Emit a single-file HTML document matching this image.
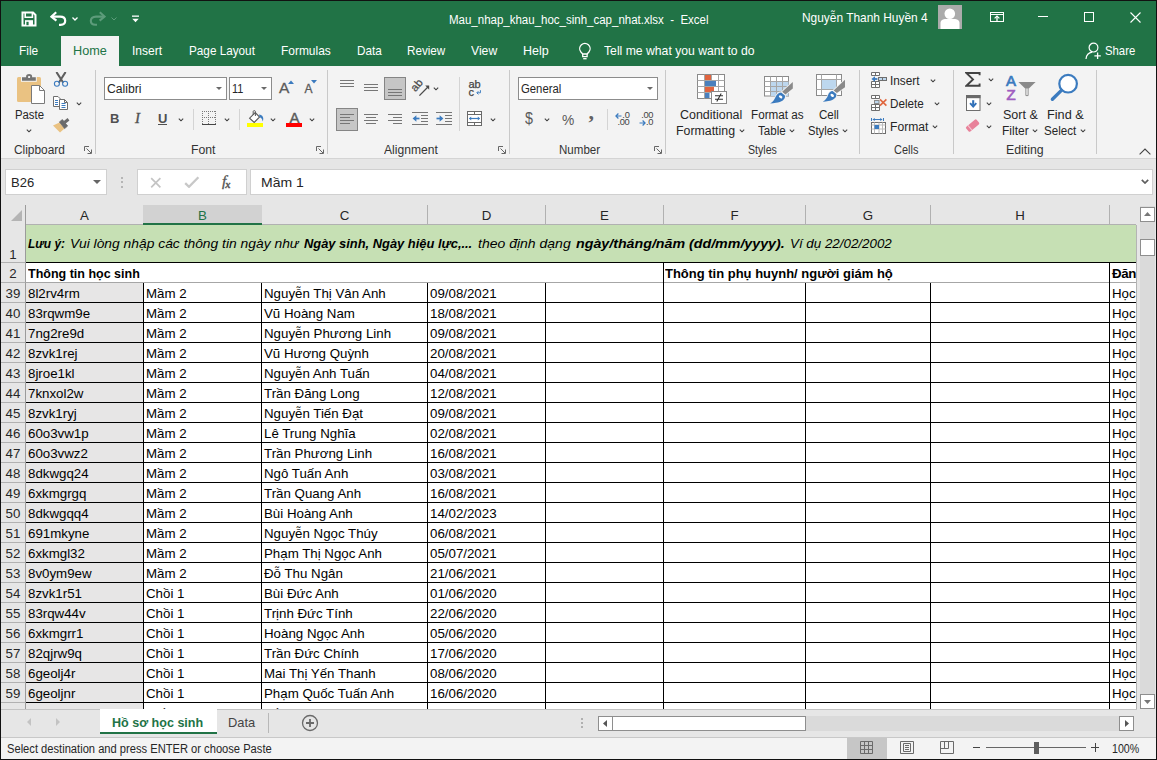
<!DOCTYPE html>
<html lang="vi">
<head>
<meta charset="utf-8">
<title>Mau_nhap_khau_hoc_sinh_cap_nhat.xlsx - Excel</title>
<style>
html,body{margin:0;padding:0;background:#e6e6e6;}
body{width:1157px;height:760px;overflow:hidden;position:relative;font-family:"Liberation Sans",sans-serif;font-size:12px;color:#262626;}
#win{position:absolute;left:0;top:0;width:1157px;height:760px;overflow:hidden;background:#e6e6e6;}
#frame{position:absolute;left:0;top:0;width:1157px;height:760px;border:1px solid #111;z-index:50;pointer-events:none;}
#win *{box-sizing:border-box;}
.abs{position:absolute;}

/* ---------- title bar ---------- */
#title{position:absolute;left:0;top:0;width:1157px;height:66px;background:#217346;}
#avatar{position:absolute;left:938px;top:5px;width:24px;height:24px;background:#ababab;overflow:hidden;}
#hometab{position:absolute;left:61px;top:36px;width:58px;height:30px;background:#f3f3f3;}

/* ---------- ribbon ---------- */
#ribbon{position:absolute;left:1px;top:66px;width:1155px;height:93px;background:#f3f3f3;border-bottom:1px solid #d4d4d4;}
.sep{position:absolute;top:70px;width:1px;height:84px;background:#c9c9c9;}
.combo{position:absolute;top:77px;height:23px;background:#fff;border:1px solid #8c8c8c;font-size:12.5px;line-height:21px;padding-left:3px;color:#262626;}
.combo i{position:absolute;right:4px;top:9px;width:0;height:0;border-left:3px solid transparent;border-right:3px solid transparent;border-top:3px solid #6a6a6a;}
.pressed{position:absolute;background:#c6c6c6;border:1px solid #858585;}

/* ---------- formula bar ---------- */
.fbox{position:absolute;top:169px;height:26px;background:#fff;border:1px solid #d0d0d0;}
#namebox{left:5px;width:102px;}
#namebox i{position:absolute;left:87px;top:10px;width:0;height:0;border-left:4px solid transparent;border-right:4px solid transparent;border-top:4px solid #666;}
#fxbox{left:137px;width:110px;}
#finput{left:250px;width:903px;}

/* ---------- grid ---------- */
#grid{position:absolute;left:0;top:0;width:1157px;height:709px;font-size:13.3px;color:#000;}
#colhdr{position:absolute;left:0;top:205px;width:1157px;height:20px;}
.corner{position:absolute;left:1px;top:0;width:25px;height:20px;border-right:1px solid #9b9b9b;}
.corner i{position:absolute;left:9.5px;top:4.5px;width:0;height:0;border-left:11.5px solid transparent;border-bottom:11.5px solid #b4b4b4;}
.ch{position:absolute;top:0;height:19px;line-height:22px;text-align:center;font-size:13.3px;color:#262626;border-right:1px solid #b1b1b1;box-sizing:content-box !important;}
.ch.sel{background:#d2d2d2;color:#217346;border-bottom:2px solid #217346;height:18px;border-right:none;padding-right:1px;margin-left:-1px;padding-left:1px;}
.rh{position:absolute;left:1px;width:25px;height:19px;line-height:22px;text-align:center;font-size:13.3px;color:#262626;border-right:1px solid #9b9b9b;border-bottom:1px solid #b1b1b1;background:#e6e6e6;box-sizing:content-box !important;width:24px;}
#r1{position:absolute;left:26px;top:225px;width:1110px;height:38px;background:#c6e0b4;border-bottom:1px solid #000;font-style:italic;white-space:nowrap;overflow:hidden;}

#r2{position:absolute;left:26px;top:263px;width:1110px;height:20px;background:#fff;border-bottom:1px solid #a6a6a6;white-space:nowrap;overflow:hidden;}
.row{position:absolute;left:26px;width:1110px;height:20px;background:#fff;border-bottom:1px solid #000;overflow:hidden;white-space:nowrap;}
.c{position:absolute;top:0;height:19px;line-height:21px;padding-left:2px;overflow:hidden;}
.c.a{left:0;width:117px;background:#e7e6e6;}
.c.b{left:118px;width:117px;}
.c.cc{left:236px;width:165px;}
.c.d{left:402px;width:117px;}
.c.i{left:1084px;width:26px;}
.vl{position:absolute;width:1px;background:#000;}

/* ---------- bottom ---------- */
#tabbar{position:absolute;left:1px;top:709px;width:1155px;height:28px;background:#e6e6e6;}
#status{position:absolute;left:1px;top:737px;width:1155px;height:22px;background:#f3f3f3;border-top:1px solid #c8c8c8;}
.sb{position:absolute;background:#fff;border:1px solid #8e8e8e;}
/* fitted text */
.f{position:absolute;display:block;white-space:nowrap;transform-origin:0 50%;line-height:1.117;}
#colhdr:after{content:'';position:absolute;left:26px;top:19px;width:1110px;height:1px;background:#b1b1b1;}
.ch.sel{z-index:2;}
</style>
</head>
<body>
<div id="win">
<!-- ===== title bar + tabs ===== -->
<div id="title">
<!-- QAT -->
<svg class="abs" style="left:21px;top:11px" width="16" height="16" viewBox="0 0 16 16"><path d="M1.5 1.5 H12 L14.5 4 V14.5 H1.5 Z" fill="none" stroke="#fff" stroke-width="2"/><path d="M4.2 1.5 V6.2 H11.4 V1.5" fill="none" stroke="#fff" stroke-width="1.6"/><rect x="4" y="9.2" width="8" height="5.5" fill="#fff"/><rect x="5.4" y="10.8" width="2.2" height="3.4" fill="#217346"/></svg>
<svg class="abs" style="left:50px;top:11px" width="17" height="15" viewBox="0 0 17 15"><path d="M6.2 1.2 L1.4 5.6 L6.4 9.6" fill="none" stroke="#fff" stroke-width="2.2" stroke-linejoin="miter"/><path d="M1.8 5.6 H10 C13.6 5.6 15.2 7.6 15.2 9.8 C15.2 12.2 13.6 13.8 10.6 13.8 H9" fill="none" stroke="#fff" stroke-width="2.2"/></svg>
<svg class="abs" style="left:72px;top:17px" width="6" height="4" viewBox="0 0 6 4"><path d="M0.5 0.5 L3 3 L5.5 0.5" fill="none" stroke="#fff" stroke-width="1.3"/></svg>
<svg class="abs" style="left:89px;top:11px" width="17" height="15" viewBox="0 0 17 15"><path d="M10.8 1.2 L15.6 5.6 L10.6 9.6" fill="none" stroke="#5d9c7b" stroke-width="2.1"/><path d="M15.2 5.6 H7 C3.4 5.6 1.8 7.6 1.8 9.8 C1.8 12.2 3.4 13.8 6.4 13.8 H8" fill="none" stroke="#5d9c7b" stroke-width="2.1"/></svg>
<svg class="abs" style="left:111px;top:17px" width="6" height="4" viewBox="0 0 6 4"><path d="M0.5 0.5 L3 3 L5.5 0.5" fill="none" stroke="#5d9c7b" stroke-width="1"/></svg>
<svg class="abs" style="left:132px;top:15px" width="7" height="8" viewBox="0 0 7 8"><rect x="0" y="0.5" width="7" height="1.3" fill="#fff"/><path d="M0.3 3.8 H6.7 L3.5 7.2 Z" fill="#fff"/></svg>

<span class="f" style="transform:scaleX(0.9581);left:448.7px;top:14.3px;font-size:12px;color:#fff;">Mau_nhap_khau_hoc_sinh_cap_nhat.xlsx&nbsp; -&nbsp; Excel</span>
<span class="f" style="transform:scaleX(0.9163);left:801.9px;top:11.3px;font-size:13px;color:#fff;">Nguyễn Thanh Huyền 4</span>

<div id="avatar"><svg width="24" height="24" viewBox="0 0 24 24"><circle cx="11.8" cy="8.8" r="5.3" fill="#fff"/><path d="M2.5 24 V18 C2.5 15.4 5 14 8 14 H16 C19 14 21.5 15.4 21.5 18 V24 Z" fill="#fff"/></svg></div>
<!-- window buttons -->
<svg class="abs" style="left:989.5px;top:12px" width="14" height="10" viewBox="0 0 14 10"><rect x="0.5" y="0.5" width="13" height="9" fill="none" stroke="#fff"/><path d="M0.5 2.5 H13.5" stroke="#fff"/><path d="M7 9.5 V4.6" fill="none" stroke="#fff" stroke-width="1.3"/><path d="M4.6 6.4 L7 4 L9.4 6.4" fill="none" stroke="#fff" stroke-width="1.2"/></svg>
<div class="abs" style="left:1038px;top:16px;width:10px;height:1px;background:#fff"></div>
<div class="abs" style="left:1084px;top:12px;width:10px;height:10px;border:1px solid #fff"></div>
<svg class="abs" style="left:1130px;top:12px" width="11" height="11" viewBox="0 0 11 11"><path d="M0.5 0.5 L10.5 10.5 M10.5 0.5 L0.5 10.5" stroke="#fff" stroke-width="1.1"/></svg>

<div id="hometab"></div>
<span class="f" style="transform:scaleX(0.9163);left:19.4px;top:44.3px;font-size:13px;color:#fff;">File</span>
<span class="f" style="transform:scaleX(0.9257);left:132.2px;top:44.3px;font-size:13px;color:#fff;">Insert</span>
<span class="f" style="transform:scaleX(0.9025);left:188.6px;top:44.3px;font-size:13px;color:#fff;">Page Layout</span>
<span class="f" style="transform:scaleX(0.9190);left:280.6px;top:44.3px;font-size:13px;color:#fff;">Formulas</span>
<span class="f" style="transform:scaleX(0.9028);left:356.8px;top:44.3px;font-size:13px;color:#fff;">Data</span>
<span class="f" style="transform:scaleX(0.8962);left:407.4px;top:44.3px;font-size:13px;color:#fff;">Review</span>
<span class="f" style="transform:scaleX(0.9373);left:471.4px;top:44.3px;font-size:13px;color:#fff;">View</span>
<span class="f" style="transform:scaleX(0.9607);left:523.4px;top:44.3px;font-size:13px;color:#fff;">Help</span>
<span class="f" style="transform:scaleX(0.9382);left:603.7px;top:44.3px;font-size:13px;color:#fff;">Tell me what you want to do</span>
<span class="f" style="transform:scaleX(0.8702);left:1104.6px;top:44.3px;font-size:13px;color:#fff;">Share</span>
<span class="f" style="transform:scaleX(0.9744);left:72.8px;top:44.3px;font-size:13px;color:#217346;">Home</span>

<!-- tab row icons -->
<svg class="abs" style="left:578px;top:42px" width="14" height="18" viewBox="0 0 14 18"><path d="M4.7 12 L2.7 9.7 A5.2 5.2 0 1 1 11.1 9.7 L9.1 12 Z" fill="none" stroke="#fff" stroke-width="1.3" stroke-linejoin="round"/><path d="M4.7 12 V14.6 H9.1 V12" fill="none" stroke="#fff" stroke-width="1.3"/><path d="M5.2 16.7 H8.6" stroke="#fff" stroke-width="1.3"/></svg>
<svg class="abs" style="left:1085px;top:42px" width="18" height="18" viewBox="0 0 18 18"><circle cx="8.5" cy="5.6" r="4.4" fill="none" stroke="#fff" stroke-width="1.2"/><path d="M1 17 C1.4 12.6 4 10.6 7.2 10.2" fill="none" stroke="#fff" stroke-width="1.2"/><path d="M12.6 10.6 V17 M9.4 13.8 H15.8" stroke="#fff" stroke-width="1.3"/></svg>

</div>
<!-- ===== ribbon ===== -->
<div id="ribbon"></div>
<!-- Clipboard -->
<svg class="abs" style="left:16px;top:73px" width="30" height="32" viewBox="0 0 30 32">
<rect x="1" y="4" width="24" height="25" rx="1.5" fill="#eac282"/>
<rect x="5" y="3.5" width="15.8" height="5.3" fill="#f3f3f3"/><path d="M6 4.2 H10.1 V3.2 C10.1 0.4 16.1 0.4 16.1 3.2 V4.2 H19.8 V7.8 H6 Z" fill="#737373"/><rect x="12.1" y="2.9" width="2" height="2" rx="0.5" fill="#f3f3f3"/>
<path d="M15.5 12.5 H23.5 L28.5 17.5 V30.5 H15.5 Z" fill="#fff" stroke="#7a7a7a"/><path d="M23.5 12.5 V17.5 H28.5" fill="none" stroke="#7a7a7a"/></svg>
<span class="f" style="transform:scaleX(0.9450);left:14.9px;top:109.0px;font-size:12px;color:#262626;">Paste</span>
<svg class="abs" style="left:26px;top:128.6px" width="6" height="4" viewBox="0 0 6 4"><path d="M0.8 0.6 L3 2.8 L5.2 0.6" fill="none" stroke="#444" stroke-width="1.15"/></svg>
<svg class="abs" style="left:53px;top:72px" width="16" height="16" viewBox="0 0 16 16">
<path d="M3.8 0.6 L9.8 10 M12.2 0.6 L6.2 10" stroke="#5f5f5f" stroke-width="2" fill="none" stroke-linecap="round"/>
<circle cx="3.9" cy="11.8" r="2.5" fill="none" stroke="#3b7bbf" stroke-width="1.1"/><circle cx="12.1" cy="11.8" r="2.5" fill="none" stroke="#3b7bbf" stroke-width="1.1"/></svg>
<svg class="abs" style="left:52px;top:95px" width="17" height="16" viewBox="0 0 17 16">
<path d="M1.5 1.5 H6 L8.5 4 V11.5 H1.5 Z" fill="#fff" stroke="#6e6e6e"/><path d="M3 5.5 H6 M3 7.5 H6 M3 9.5 H6" stroke="#3b7bbf"/>
<path d="M7.5 4.5 H12.5 L15.5 7.5 V14.5 H7.5 Z" fill="#fff" stroke="#6e6e6e"/><path d="M12.5 4.5 V7.5 H15.5" fill="none" stroke="#6e6e6e"/><path d="M9.5 8.5 H13.5 M9.5 10.5 H13.5 M9.5 12.5 H13.5" stroke="#3b7bbf"/></svg>
<svg class="abs" style="left:76px;top:102px" width="6" height="4" viewBox="0 0 6 4"><path d="M0.8 0.6 L3 2.8 L5.2 0.6" fill="none" stroke="#444" stroke-width="1.15"/></svg>
<svg class="abs" style="left:52px;top:118px" width="18" height="16" viewBox="0 0 18 16">
<path d="M1 7.5 L7.5 4.5 L12.5 10.5 L8 14.6 Z" fill="#eac282"/>
<path d="M7.4 3.9 L10.4 1.6 L15.6 8 L12.6 10.6 Z" fill="#6a6a6a" stroke="#6a6a6a" stroke-width="0.8" stroke-linejoin="round"/>
<path d="M11.6 3.3 L15.6 0.1 L17.4 2.5 L13.4 5.7 Z" fill="#6a6a6a"/></svg>
<span class="f" style="transform:scaleX(0.9908);left:14.0px;top:143.8px;font-size:12px;color:#333;">Clipboard</span>
<svg class="abs" style="left:84px;top:146px" width="8" height="8" viewBox="0 0 8 8"><path d="M0.5 5 V0.5 H5" fill="none" stroke="#666"/><path d="M2.5 2.5 L7 7 M7.5 3.5 V7.5 H3.5" fill="none" stroke="#666"/></svg>
<div class="sep" style="left:95px"></div>
<!-- Font -->
<div class="combo" style="left:104px;width:123px"><i></i></div>
<span class="f" style="transform:scaleX(1.0142);left:106.9px;top:82.6px;font-size:12px;color:#262626;">Calibri</span>
<div class="combo" style="left:229px;width:43px"><i></i></div>
<span class="f" style="transform:scaleX(0.9063);left:232.3px;top:82.6px;font-size:12px;color:#262626;">11</span>
<div class="abs" style="left:279px;top:80px;font-size:15.5px;color:#5a5a5a;line-height:16px;-webkit-text-stroke:0.3px #5a5a5a">A</div>
<svg class="abs" style="left:288px;top:80px" width="6" height="4" viewBox="0 0 6 4"><path d="M0 4 L3 0.4 L6 4 Z" fill="#3b7bbf"/></svg>
<div class="abs" style="left:304.5px;top:83px;font-size:12px;color:#5a5a5a;line-height:13px;-webkit-text-stroke:0.3px #5a5a5a">A</div>
<svg class="abs" style="left:311px;top:80px" width="6" height="4" viewBox="0 0 6 4"><path d="M0 0 L3 3.6 L6 0 Z" fill="#3b7bbf"/></svg>
<div class="abs" style="left:110px;top:111px;font-size:13px;font-weight:bold;color:#505050;line-height:15px">B</div>
<div class="abs" style="left:135px;top:110px;font-family:'Liberation Serif',serif;font-size:15px;font-style:italic;color:#505050;line-height:16px;-webkit-text-stroke:0.35px #505050">I</div>
<div class="abs" style="left:158px;top:111px;font-size:13px;color:#505050;line-height:15px;border-bottom:1px solid #505050;height:14px;font-weight:bold">U</div>
<svg class="abs" style="left:178px;top:118px" width="6" height="4" viewBox="0 0 6 4"><path d="M0.8 0.6 L3 2.8 L5.2 0.6" fill="none" stroke="#444" stroke-width="1.15"/></svg>
<div class="abs" style="left:193px;top:109px;width:1px;height:21px;background:#d4d4d4"></div>
<svg class="abs" style="left:202px;top:111px" width="14" height="14" viewBox="0 0 14 14" shape-rendering="crispEdges">
<path d="M0 0.5 H14 M0 6.5 H14" fill="none" stroke="#7a7a7a" stroke-dasharray="1 1"/><path d="M0.5 0 V13 M6.5 0 V13 M13.5 0 V13" fill="none" stroke="#7a7a7a" stroke-dasharray="1 1"/><path d="M0 13.5 H14" stroke="#444"/></svg>
<svg class="abs" style="left:224px;top:118px" width="6" height="4" viewBox="0 0 6 4"><path d="M0.8 0.6 L3 2.8 L5.2 0.6" fill="none" stroke="#444" stroke-width="1.15"/></svg>
<div class="abs" style="left:239px;top:109px;width:1px;height:21px;background:#d4d4d4"></div>
<svg class="abs" style="left:247px;top:110px" width="18" height="17" viewBox="0 0 18 17">
<path d="M8.2 2.6 L2.6 8.2 L7.2 12.4 L12.6 7 Z" fill="#fff" stroke="#5a5a5a" stroke-width="1.1"/>
<path d="M6.2 5 V1.4 C6.2 0.4 8.4 0.4 8.4 1.4 V6" fill="none" stroke="#5a5a5a"/>
<path d="M12 4.6 C15.6 4.8 17.2 8 15.8 11.4 C15.2 8.8 14.2 7.8 12.6 7 Z" fill="#3b7bbf"/>
<rect x="0" y="13" width="16" height="4" fill="#ffff00"/></svg>
<svg class="abs" style="left:270px;top:118px" width="6" height="4" viewBox="0 0 6 4"><path d="M0.8 0.6 L3 2.8 L5.2 0.6" fill="none" stroke="#444" stroke-width="1.15"/></svg>
<div class="abs" style="left:289.5px;top:110px;font-size:15px;color:#5a5a5a;line-height:16px;-webkit-text-stroke:0.4px #5a5a5a">A</div>
<div class="abs" style="left:286px;top:123px;width:16px;height:4px;background:#ff0000"></div>
<svg class="abs" style="left:309px;top:118px" width="6" height="4" viewBox="0 0 6 4"><path d="M0.8 0.6 L3 2.8 L5.2 0.6" fill="none" stroke="#444" stroke-width="1.15"/></svg>
<span class="f" style="transform:scaleX(1.0202);left:190.9px;top:143.8px;font-size:12px;color:#333;">Font</span>
<svg class="abs" style="left:316px;top:146px" width="8" height="8" viewBox="0 0 8 8"><path d="M0.5 5 V0.5 H5" fill="none" stroke="#666"/><path d="M2.5 2.5 L7 7 M7.5 3.5 V7.5 H3.5" fill="none" stroke="#666"/></svg>
<div class="sep" style="left:327px"></div>
<!-- Alignment -->
<div class="abs" style="left:340px;top:80px;width:14px;height:1px;background:#767676"></div>
<div class="abs" style="left:340px;top:83px;width:14px;height:1px;background:#767676"></div>
<div class="abs" style="left:340px;top:86px;width:14px;height:1px;background:#767676"></div>
<div class="abs" style="left:364px;top:84px;width:14px;height:1px;background:#767676"></div>
<div class="abs" style="left:364px;top:87px;width:14px;height:1px;background:#767676"></div>
<div class="abs" style="left:364px;top:90px;width:14px;height:1px;background:#767676"></div>
<div class="pressed" style="left:384px;top:77px;width:22px;height:23px"></div>
<div class="abs" style="left:388px;top:89px;width:14px;height:1px;background:#767676"></div>
<div class="abs" style="left:388px;top:92px;width:14px;height:1px;background:#767676"></div>
<div class="abs" style="left:388px;top:95px;width:14px;height:1px;background:#767676"></div>
<svg class="abs" style="left:410.5px;top:79px" width="20" height="19" viewBox="0 0 20 19"><path d="M8.4 16.6 L17.2 7.8" fill="none" stroke="#4a4a4a" stroke-width="1.3"/><path d="M14.2 6.6 L18.2 6.6 L18.2 10.8 Z" fill="#4a4a4a"/><text x="0" y="0" transform="translate(4.6 13.2) rotate(-50)" font-family="Liberation Sans, sans-serif" font-size="11" fill="#4a4a4a" stroke="#4a4a4a" stroke-width="0.25">ab</text></svg>
<svg class="abs" style="left:433px;top:87px" width="6" height="4" viewBox="0 0 6 4"><path d="M0.8 0.6 L3 2.8 L5.2 0.6" fill="none" stroke="#444" stroke-width="1.15"/></svg>
<div class="abs" style="left:459px;top:77px;width:1px;height:54px;background:#d4d4d4"></div>
<div class="pressed" style="left:336px;top:108px;width:22px;height:23px"></div>
<div class="abs" style="left:340px;top:114px;width:14px;height:1px;background:#767676"></div>
<div class="abs" style="left:340px;top:117px;width:10px;height:1px;background:#767676"></div>
<div class="abs" style="left:340px;top:120px;width:14px;height:1px;background:#767676"></div>
<div class="abs" style="left:340px;top:123px;width:10px;height:1px;background:#767676"></div>
<div class="abs" style="left:364px;top:114px;width:14px;height:1px;background:#767676"></div>
<div class="abs" style="left:366px;top:117px;width:10px;height:1px;background:#767676"></div>
<div class="abs" style="left:364px;top:120px;width:14px;height:1px;background:#767676"></div>
<div class="abs" style="left:366px;top:123px;width:10px;height:1px;background:#767676"></div>
<div class="abs" style="left:388px;top:114px;width:14px;height:1px;background:#767676"></div>
<div class="abs" style="left:393px;top:117px;width:9px;height:1px;background:#767676"></div>
<div class="abs" style="left:388px;top:120px;width:14px;height:1px;background:#767676"></div>
<div class="abs" style="left:393px;top:123px;width:9px;height:1px;background:#767676"></div>
<div class="abs" style="left:412px;top:112px;width:16px;height:1px;background:#767676"></div>
<div class="abs" style="left:421px;top:115px;width:7px;height:1px;background:#767676"></div>
<div class="abs" style="left:421px;top:118px;width:7px;height:1px;background:#767676"></div>
<div class="abs" style="left:421px;top:121px;width:7px;height:1px;background:#767676"></div>
<div class="abs" style="left:412px;top:124px;width:16px;height:1px;background:#767676"></div>
<svg class="abs" style="left:412px;top:115px" width="8" height="7" viewBox="0 0 8 7"><path d="M7.5 3.5 H2.4" fill="none" stroke="#3b7bbf" stroke-width="1.7"/><path d="M4.4 0.2 L0.6 3.5 L4.4 6.8 Z" fill="#3b7bbf"/></svg>
<div class="abs" style="left:436px;top:112px;width:16px;height:1px;background:#767676"></div>
<div class="abs" style="left:445px;top:115px;width:7px;height:1px;background:#767676"></div>
<div class="abs" style="left:445px;top:118px;width:7px;height:1px;background:#767676"></div>
<div class="abs" style="left:445px;top:121px;width:7px;height:1px;background:#767676"></div>
<div class="abs" style="left:436px;top:124px;width:16px;height:1px;background:#767676"></div>
<svg class="abs" style="left:436px;top:115px" width="8" height="7" viewBox="0 0 8 7"><path d="M0.5 3.5 H5.6" fill="none" stroke="#3b7bbf" stroke-width="1.7"/><path d="M3.6 0.2 L7.4 3.5 L3.6 6.8 Z" fill="#3b7bbf"/></svg>
<div class="abs" style="left:468.5px;top:80px;font-size:11px;line-height:8.3px;color:#444;letter-spacing:-0.2px;-webkit-text-stroke:0.25px #444">ab<br>c</div>
<svg class="abs" style="left:476px;top:90px" width="5" height="5" viewBox="0 0 5 5"><path d="M4.4 0.2 V2.8 H1 M2.4 1.2 L0.8 2.8 L2.4 4.4" fill="none" stroke="#3b7bbf" stroke-width="1"/></svg>
<svg class="abs" style="left:467px;top:111px" width="16" height="16" viewBox="0 0 16 16"><rect x="0.5" y="0.5" width="14" height="14" fill="#fff" stroke="#6a6a6a"/><path d="M0.5 3.5 H14.5 M0.5 11.5 H14.5 M7.5 0.5 V3.5 M7.5 11.5 V14.5" stroke="#6a6a6a" fill="none"/><path d="M2.4 7.5 H12.6" fill="none" stroke="#3b7bbf" stroke-width="1.2"/><path d="M4.2 5.6 L2 7.5 L4.2 9.4 Z M10.8 5.6 L13 7.5 L10.8 9.4 Z" fill="#3b7bbf"/></svg>
<svg class="abs" style="left:490px;top:118px" width="6" height="4" viewBox="0 0 6 4"><path d="M0.8 0.6 L3 2.8 L5.2 0.6" fill="none" stroke="#444" stroke-width="1.15"/></svg>
<span class="f" style="transform:scaleX(1.0080);left:383.5px;top:143.8px;font-size:12px;color:#333;">Alignment</span>
<svg class="abs" style="left:498px;top:146px" width="8" height="8" viewBox="0 0 8 8"><path d="M0.5 5 V0.5 H5" fill="none" stroke="#666"/><path d="M2.5 2.5 L7 7 M7.5 3.5 V7.5 H3.5" fill="none" stroke="#666"/></svg>
<div class="sep" style="left:509px"></div>
<!-- Number -->
<div class="combo" style="left:518px;width:140px"><i></i></div>
<span class="f" style="transform:scaleX(0.9437);left:521.2px;top:82.6px;font-size:12px;color:#262626;">General</span>
<div class="abs" style="left:525px;top:109px;font-size:17px;color:#5a5a5a;line-height:19px;transform:scaleX(0.84);transform-origin:left">$</div>
<svg class="abs" style="left:544px;top:118px" width="6" height="4" viewBox="0 0 6 4"><path d="M0.8 0.6 L3 2.8 L5.2 0.6" fill="none" stroke="#444" stroke-width="1.15"/></svg>
<div class="abs" style="left:562px;top:111px;font-size:15px;color:#5a5a5a;line-height:17px;transform:scaleX(0.92);transform-origin:left">%</div>
<div class="abs" style="left:588.5px;top:100.8px;font-family:'Liberation Serif',serif;font-size:22px;font-weight:bold;color:#626262;line-height:22px">,</div>
<div class="abs" style="left:607px;top:109px;width:1px;height:21px;background:#d4d4d4"></div>
<div class="abs" style="left:620.5px;top:112px;font-size:9.3px;line-height:7.2px;color:#444;text-align:right;width:9px;letter-spacing:-0.3px">.0<br><span style="margin-left:-6px">.00</span></div>
<svg class="abs" style="left:615px;top:112.7px" width="7" height="6" viewBox="0 0 7 6"><path d="M6.5 3 H1 M3.4 0.5 L0.9 3 L3.4 5.5" fill="none" stroke="#3b7bbf" stroke-width="1.2"/></svg>
<div class="abs" style="left:641.2px;top:112px;font-size:9.3px;line-height:7.2px;color:#444;text-align:right;width:12px;letter-spacing:-0.3px">.00<br>.0</div>
<svg class="abs" style="left:639px;top:119.5px" width="7" height="6" viewBox="0 0 7 6"><path d="M0.5 3 H6 M3.6 0.5 L6.1 3 L3.6 5.5" fill="none" stroke="#3b7bbf" stroke-width="1.2"/></svg>
<span class="f" style="transform:scaleX(0.9628);left:559.0px;top:143.8px;font-size:12px;color:#333;">Number</span>
<svg class="abs" style="left:654px;top:146px" width="8" height="8" viewBox="0 0 8 8"><path d="M0.5 5 V0.5 H5" fill="none" stroke="#666"/><path d="M2.5 2.5 L7 7 M7.5 3.5 V7.5 H3.5" fill="none" stroke="#666"/></svg>
<div class="sep" style="left:665px"></div>
<!-- Styles -->
<svg class="abs" style="left:697px;top:74px" width="31" height="31" viewBox="0 0 31 31">
<rect x="0.5" y="0.5" width="27" height="24" fill="#fff" stroke="#8a8a8a"/>
<path d="M7.5 0.5 V24.5 M14.5 0.5 V24.5 M21.5 0.5 V24.5 M0.5 6.5 H27.5 M0.5 12.5 H27.5 M0.5 18.5 H27.5" stroke="#a6a6a6" fill="none"/>
<rect x="8" y="1" width="6" height="5" fill="#e0643f"/><rect x="8" y="7" width="11" height="5" fill="#4a80bd"/><rect x="8" y="13" width="9" height="5" fill="#e0643f"/><rect x="8" y="19" width="4.5" height="5" fill="#4a80bd"/>
<rect x="14.5" y="17.5" width="15" height="12" fill="#fff" stroke="#8a8a8a"/>
<path d="M18 21.8 H26 M18 25.2 H26 M24.2 19.4 L19.8 27.6" stroke="#333" stroke-width="1.1" fill="none"/></svg>
<span class="f" style="transform:scaleX(1.0375);left:680.0px;top:109.0px;font-size:12px;color:#262626;">Conditional</span>
<span class="f" style="transform:scaleX(1.0286);left:675.9px;top:124.6px;font-size:12px;color:#262626;">Formatting</span>
<svg class="abs" style="left:739px;top:129px" width="6" height="4" viewBox="0 0 6 4"><path d="M0.8 0.6 L3 2.8 L5.2 0.6" fill="none" stroke="#444" stroke-width="1.15"/></svg>
<svg class="abs" style="left:764px;top:76px" width="31" height="29" viewBox="0 0 31 29">
<rect x="0.5" y="0.5" width="24" height="19.5" fill="#fff" stroke="#8a8a8a"/>
<rect x="6.5" y="5.5" width="18" height="14.5" fill="#bdd7ee"/>
<path d="M6.5 0.5 V20 M12.5 0.5 V20 M18.5 0.5 V20 M0.5 5.5 H24.5 M0.5 10.5 H24.5 M0.5 15.5 H24.5" stroke="#a6a6a6" fill="none"/>
<path d="M28.8 6 L28.8 12.6 L21.4 18.4 L18.2 15.8 Z" fill="#8a8a8a" stroke="#f3f3f3" stroke-width="1.6" paint-order="stroke"/>
<path d="M17.2 16.4 L20.9 19.4 C21.8 23.2 17.4 26.2 12 26.8 C10 27.1 8 27.5 6.2 27.6 C9.4 25.6 10.8 23 11.8 20.6 C12.8 18.2 14.8 16.4 17.2 16.4 Z" fill="#3b7bbf" stroke="#f3f3f3" stroke-width="1.6" paint-order="stroke"/><ellipse cx="16.6" cy="20.8" rx="1.9" ry="1.3" transform="rotate(35 16.6 20.8)" fill="#fff"/></svg>
<span class="f" style="transform:scaleX(0.9738);left:750.7px;top:109.0px;font-size:12px;color:#262626;">Format as</span>
<span class="f" style="transform:scaleX(0.9656);left:758.2px;top:124.6px;font-size:12px;color:#262626;">Table</span>
<svg class="abs" style="left:789px;top:129px" width="6" height="4" viewBox="0 0 6 4"><path d="M0.8 0.6 L3 2.8 L5.2 0.6" fill="none" stroke="#444" stroke-width="1.15"/></svg>
<svg class="abs" style="left:816px;top:74px" width="31" height="29" viewBox="0 0 31 29">
<rect x="0.5" y="0.5" width="25" height="21" fill="#fff" stroke="#8a8a8a"/>
<path d="M5.5 0.5 V21.5 M20.5 0.5 V21.5 M0.5 5.5 H25.5 M0.5 15.5 H25.5" stroke="#a6a6a6" fill="none"/>
<rect x="6" y="6" width="14" height="9" fill="#bdd7ee"/>
<path d="M29 5.8 L29 13.2 L20.8 19 L17.6 16.4 Z" fill="#8a8a8a" stroke="#f3f3f3" stroke-width="1.6" paint-order="stroke"/>
<path d="M16.6 17 L20.3 20 C21.2 23.6 17 26.4 12.4 27 C10.4 27.3 8.6 27.6 6.8 27.7 C10 25.7 11.2 23.4 12 21.2 C12.8 18.8 14.4 17 16.6 17 Z" fill="#3b7bbf" stroke="#f3f3f3" stroke-width="1.6" paint-order="stroke"/><ellipse cx="16.2" cy="21.4" rx="1.9" ry="1.3" transform="rotate(35 16.2 21.4)" fill="#fff"/></svg>
<span class="f" style="transform:scaleX(0.9627);left:818.9px;top:109.0px;font-size:12px;color:#262626;">Cell</span>
<span class="f" style="transform:scaleX(0.9331);left:807.6px;top:124.6px;font-size:12px;color:#262626;">Styles</span>
<svg class="abs" style="left:842px;top:129px" width="6" height="4" viewBox="0 0 6 4"><path d="M0.8 0.6 L3 2.8 L5.2 0.6" fill="none" stroke="#444" stroke-width="1.15"/></svg>
<span class="f" style="transform:scaleX(0.8841);left:748.0px;top:143.8px;font-size:12px;color:#333;">Styles</span>
<div class="sep" style="left:859px"></div>
<!-- Cells -->
<svg class="abs" style="left:871px;top:72px" width="17" height="17" viewBox="0 0 17 17">
<path d="M0.5 0.5 H8.5 V3.5 H0.5 Z M4.5 0.5 V3.5" fill="#fff" stroke="#6e6e6e"/>
<path d="M0.5 9.5 H8.5 V15.5 H0.5 Z M4.5 9.5 V15.5 M0.5 12.5 H8.5" fill="#fff" stroke="#6e6e6e"/>
<rect x="7.5" y="5.5" width="8" height="3" fill="#bdd7ee" stroke="#6e6e6e"/><path d="M11.5 5.5 V8.5" stroke="#6e6e6e"/>
<path d="M6.4 7 H2.6" fill="none" stroke="#3b7bbf" stroke-width="1.8"/><path d="M4 4.2 L0.4 7 L4 9.8 Z" fill="#3b7bbf"/></svg>
<span class="f" style="transform:scaleX(0.9828);left:889.9px;top:74.7px;font-size:12px;color:#262626;">Insert</span>
<svg class="abs" style="left:930px;top:78.5px" width="6" height="4" viewBox="0 0 6 4"><path d="M0.8 0.6 L3 2.8 L5.2 0.6" fill="none" stroke="#444" stroke-width="1.15"/></svg>
<svg class="abs" style="left:871px;top:95px" width="17" height="17" viewBox="0 0 17 17">
<path d="M0.5 0.5 H8.5 V3.5 H0.5 Z M4.5 0.5 V3.5" fill="#fff" stroke="#6e6e6e"/>
<path d="M0.5 9.5 H8.5 V15.5 H0.5 Z M4.5 9.5 V15.5 M0.5 12.5 H8.5" fill="#fff" stroke="#6e6e6e"/>
<rect x="3.5" y="5.5" width="4.5" height="3" fill="#bdd7ee" stroke="#8a8a8a"/>
<path d="M9 4.4 L15.4 10.6 M15.4 4.4 L9 10.6" stroke="#e0673f" stroke-width="1.6"/></svg>
<span class="f" style="transform:scaleX(0.9715);left:889.9px;top:97.5px;font-size:12px;color:#262626;">Delete</span>
<svg class="abs" style="left:934px;top:101.5px" width="6" height="4" viewBox="0 0 6 4"><path d="M0.8 0.6 L3 2.8 L5.2 0.6" fill="none" stroke="#444" stroke-width="1.15"/></svg>
<svg class="abs" style="left:871px;top:118px" width="17" height="17" viewBox="0 0 17 17">
<path d="M0.5 0 V3 M12.5 0 V3 M2 1.5 H11" fill="none" stroke="#3b7bbf"/><path d="M3.8 0 L1.4 1.5 L3.8 3 Z M9.2 0 L11.6 1.5 L9.2 3 Z" fill="#3b7bbf"/>
<rect x="0.5" y="4.5" width="14" height="11" fill="#fff" stroke="#6e6e6e"/><path d="M0.5 7 H14.5 M0.5 11 H14.5 M3.5 4.5 V15.5 M8 4.5 V15.5 M11.5 4.5 V15.5" stroke="#bdbdbd" fill="none"/>
<rect x="3.5" y="7" width="4.5" height="4" fill="#3b7bbf"/></svg>
<span class="f" style="transform:scaleX(1.0101);left:889.9px;top:120.7px;font-size:12px;color:#262626;">Format</span>
<svg class="abs" style="left:932px;top:124.5px" width="6" height="4" viewBox="0 0 6 4"><path d="M0.8 0.6 L3 2.8 L5.2 0.6" fill="none" stroke="#444" stroke-width="1.15"/></svg>
<span class="f" style="transform:scaleX(0.9148);left:893.9px;top:143.8px;font-size:12px;color:#333;">Cells</span>
<div class="sep" style="left:953px"></div>
<!-- Editing -->
<svg class="abs" style="left:965px;top:72px" width="16" height="15" viewBox="0 0 16 15"><path d="M14.6 3.2 V1 H1.4 L8 7.4 L1.4 13.8 H14.6 V11.6" fill="none" stroke="#444" stroke-width="1.9" stroke-linejoin="miter"/></svg>
<svg class="abs" style="left:988px;top:78px" width="6" height="4" viewBox="0 0 6 4"><path d="M0.8 0.6 L3 2.8 L5.2 0.6" fill="none" stroke="#444" stroke-width="1.15"/></svg>
<svg class="abs" style="left:966px;top:95px" width="15" height="16" viewBox="0 0 15 16"><rect x="0.5" y="0.5" width="13.5" height="15" fill="#fff" stroke="#6e6e6e"/><rect x="0" y="0" width="14.5" height="3.2" fill="#6a6a6a"/><path d="M7.2 5.2 V10.4" fill="none" stroke="#2f6fb8" stroke-width="2.1"/><path d="M3.4 8.8 L7.2 13 L11 8.8 L9.6 7.6 L7.2 10.2 L4.8 7.6 Z" fill="#2f6fb8"/></svg>
<svg class="abs" style="left:986px;top:101.5px" width="6" height="4" viewBox="0 0 6 4"><path d="M0.8 0.6 L3 2.8 L5.2 0.6" fill="none" stroke="#444" stroke-width="1.15"/></svg>
<svg class="abs" style="left:965px;top:118px" width="16" height="15" viewBox="0 0 16 15"><g transform="rotate(-40 7.5 7.6)"><rect x="0.8" y="4.5" width="13.6" height="6.2" rx="1.3" fill="#e8829a"/><rect x="3.6" y="4.5" width="1" height="6.2" fill="#f6c8d2"/></g></svg>
<svg class="abs" style="left:986px;top:124.5px" width="6" height="4" viewBox="0 0 6 4"><path d="M0.8 0.6 L3 2.8 L5.2 0.6" fill="none" stroke="#444" stroke-width="1.15"/></svg>
<div class="abs" style="left:1006px;top:73px;font-size:15px;color:#3b7bbf;line-height:15px;-webkit-text-stroke:0.7px #3b7bbf">A</div>
<div class="abs" style="left:1006.5px;top:87px;font-size:15px;color:#a05cc0;line-height:15px;-webkit-text-stroke:0.7px #a05cc0">Z</div>
<svg class="abs" style="left:1018px;top:81px" width="18" height="16" viewBox="0 0 18 16"><path d="M0.4 1 H17.6 L10.6 7.8 H7.4 Z" fill="#8a8a8a"/><path d="M7.9 7.8 V14.6 H10.1 V7.8" fill="#fff" stroke="#8a8a8a" stroke-width="1"/></svg>
<span class="f" style="transform:scaleX(1.0432);left:1003.4px;top:109.0px;font-size:12px;color:#262626;">Sort &amp;</span>
<span class="f" style="transform:scaleX(1.0011);left:1001.6px;top:124.6px;font-size:12px;color:#262626;">Filter</span>
<svg class="abs" style="left:1032px;top:129px" width="6" height="4" viewBox="0 0 6 4"><path d="M0.8 0.6 L3 2.8 L5.2 0.6" fill="none" stroke="#444" stroke-width="1.15"/></svg>
<svg class="abs" style="left:1049px;top:72px" width="30" height="30" viewBox="0 0 30 30"><circle cx="19.1" cy="11.7" r="8.8" fill="#fff" stroke="#3b7bbf" stroke-width="2.2"/><path d="M12.4 18.4 L3.4 27.2" stroke="#3b7bbf" stroke-width="3.4" stroke-linecap="round"/></svg>
<span class="f" style="transform:scaleX(1.0609);left:1046.6px;top:109.0px;font-size:12px;color:#262626;">Find &amp;</span>
<span class="f" style="transform:scaleX(0.9652);left:1043.5px;top:124.6px;font-size:12px;color:#262626;">Select</span>
<svg class="abs" style="left:1080px;top:129px" width="6" height="4" viewBox="0 0 6 4"><path d="M0.8 0.6 L3 2.8 L5.2 0.6" fill="none" stroke="#444" stroke-width="1.15"/></svg>
<span class="f" style="transform:scaleX(1.0272);left:1005.6px;top:143.8px;font-size:12px;color:#333;">Editing</span>
<div class="sep" style="left:1096px"></div>
<svg class="abs" style="left:1139px;top:148px" width="12" height="7" viewBox="0 0 12 7"><path d="M0.6 6.4 L6 1 L11.4 6.4" fill="none" stroke="#444" stroke-width="1.1"/></svg>

<!-- ===== formula bar ===== -->
<div class="fbox" id="namebox"><i></i></div>
<div class="fbox" id="fxbox"></div>
<div class="fbox" id="finput"></div>
<span class="f" style="transform:scaleX(0.9801);left:11.4px;top:175.9px;font-size:13.3px;color:#262626;">B26</span>
<span class="f" style="transform:scaleX(1.0531);left:261.1px;top:175.9px;font-size:13.3px;color:#262626;">Mầm 1</span>

<!-- formula bar icons -->
<div class="abs" style="left:121px;top:177px;width:2px;height:11px;background:repeating-linear-gradient(#b5b5b5 0 2px,transparent 2px 4.5px)"></div>
<svg class="abs" style="left:150px;top:177px" width="12" height="12" viewBox="0 0 12 12"><path d="M1.2 1.2 L10.4 10.4 M10.4 1.2 L1.2 10.4" stroke="#c4c4c4" stroke-width="1.7"/></svg>
<svg class="abs" style="left:184px;top:176px" width="16" height="12" viewBox="0 0 16 12"><path d="M1.2 7.2 L5 10.8 L14.4 1.2" fill="none" stroke="#c8c8c8" stroke-width="2.3"/></svg>
<div class="abs" style="left:222px;top:172px;font-family:'Liberation Serif',serif;font-style:italic;font-size:15.5px;color:#555;letter-spacing:-0.5px;-webkit-text-stroke:0.3px #555"><b style="font-weight:normal">f</b><span style="font-size:10.5px;position:relative;top:1.5px;left:-0.5px;font-weight:bold">x</span></div>
<svg class="abs" style="left:1141px;top:179px" width="8" height="5" viewBox="0 0 8 5"><path d="M0.8 0.8 L4 4 L7.2 0.8" fill="none" stroke="#5e5e5e" stroke-width="1.7"/></svg>

<div id="grid">
<div id="colhdr">
<div class="corner"><i></i></div>
<div class="ch" style="left:26px;width:117px">A</div>
<div class="ch sel" style="left:144px;width:117px">B</div>
<div class="ch" style="left:262px;width:165px">C</div>
<div class="ch" style="left:428px;width:117px">D</div>
<div class="ch" style="left:546px;width:117px">E</div>
<div class="ch" style="left:664px;width:141px">F</div>
<div class="ch" style="left:806px;width:124px">G</div>
<div class="ch" style="left:931px;width:178px">H</div>
<div class="ch" style="left:1110px;width:26px;border-right:none"></div>
</div>
<div class="rh" style="top:225px;height:37px;line-height:59px">1</div>
<div id="r1"></div>
<span class="f" style="transform:scaleX(0.8966);left:28.1px;top:236.6px;font-size:13.3px;font-style:italic;font-weight:bold;">Lưu ý:</span><span class="f" style="transform:scaleX(1.0409);left:70.3px;top:236.6px;font-size:13.3px;font-style:italic;">Vui lòng nhập các thông tin ngày như</span><span class="f" style="transform:scaleX(0.9693);left:303.7px;top:236.6px;font-size:13.3px;font-style:italic;font-weight:bold;">Ngày sinh, Ngày hiệu lực,...</span><span class="f" style="transform:scaleX(1.0534);left:478.4px;top:236.6px;font-size:13.3px;font-style:italic;">theo định dạng</span><span class="f" style="transform:scaleX(1.0699);left:575.9px;top:236.6px;font-size:13.3px;font-style:italic;font-weight:bold;">ngày/tháng/năm (dd/mm/yyyy).</span><span class="f" style="transform:scaleX(1.0050);left:790.2px;top:236.6px;font-size:13.3px;font-style:italic;">Ví dụ 22/02/2002</span>
<div class="rh" style="top:263px">2</div>
<div id="r2"></div>
<span class="f" style="transform:scaleX(0.9401);left:28.1px;top:266.8px;font-size:13.3px;font-weight:bold;">Thông tin học sinh</span><span class="f" style="transform:scaleX(0.9765);left:665.4px;top:266.8px;font-size:13.3px;font-weight:bold;">Thông tin phụ huynh/ người giám hộ</span><div class="abs" style="left:1110px;top:263px;width:26px;height:19px;overflow:hidden"><b style="position:absolute;left:2px;top:3px;font-size:13.3px;white-space:nowrap;letter-spacing:-0.4px">Đăng ký</b></div>
<div class="rh" style="top:283px">39</div><div class="row" style="top:283px"><span class="c a">8l2rv4rm</span><span class="c b">Mầm 2</span><span class="c cc">Nguyễn Thị Vân Anh</span><span class="c d">09/08/2021</span><span class="c i">Học</span></div>
<div class="rh" style="top:303px">40</div><div class="row" style="top:303px"><span class="c a">83rqwm9e</span><span class="c b">Mầm 2</span><span class="c cc">Vũ Hoàng Nam</span><span class="c d">18/08/2021</span><span class="c i">Học</span></div>
<div class="rh" style="top:323px">41</div><div class="row" style="top:323px"><span class="c a">7ng2re9d</span><span class="c b">Mầm 2</span><span class="c cc">Nguyễn Phương Linh</span><span class="c d">09/08/2021</span><span class="c i">Học</span></div>
<div class="rh" style="top:343px">42</div><div class="row" style="top:343px"><span class="c a">8zvk1rej</span><span class="c b">Mầm 2</span><span class="c cc">Vũ Hương Quỳnh</span><span class="c d">20/08/2021</span><span class="c i">Học</span></div>
<div class="rh" style="top:363px">43</div><div class="row" style="top:363px"><span class="c a">8jroe1kl</span><span class="c b">Mầm 2</span><span class="c cc">Nguyễn Anh Tuấn</span><span class="c d">04/08/2021</span><span class="c i">Học</span></div>
<div class="rh" style="top:383px">44</div><div class="row" style="top:383px"><span class="c a">7knxol2w</span><span class="c b">Mầm 2</span><span class="c cc">Trần Đăng Long</span><span class="c d">12/08/2021</span><span class="c i">Học</span></div>
<div class="rh" style="top:403px">45</div><div class="row" style="top:403px"><span class="c a">8zvk1ryj</span><span class="c b">Mầm 2</span><span class="c cc">Nguyễn Tiến Đạt</span><span class="c d">09/08/2021</span><span class="c i">Học</span></div>
<div class="rh" style="top:423px">46</div><div class="row" style="top:423px"><span class="c a">60o3vw1p</span><span class="c b">Mầm 2</span><span class="c cc">Lê Trung Nghĩa</span><span class="c d">02/08/2021</span><span class="c i">Học</span></div>
<div class="rh" style="top:443px">47</div><div class="row" style="top:443px"><span class="c a">60o3vwz2</span><span class="c b">Mầm 2</span><span class="c cc">Trần Phương Linh</span><span class="c d">16/08/2021</span><span class="c i">Học</span></div>
<div class="rh" style="top:463px">48</div><div class="row" style="top:463px"><span class="c a">8dkwgq24</span><span class="c b">Mầm 2</span><span class="c cc">Ngô Tuấn Anh</span><span class="c d">03/08/2021</span><span class="c i">Học</span></div>
<div class="rh" style="top:483px">49</div><div class="row" style="top:483px"><span class="c a">6xkmgrgq</span><span class="c b">Mầm 2</span><span class="c cc">Trần Quang Anh</span><span class="c d">16/08/2021</span><span class="c i">Học</span></div>
<div class="rh" style="top:503px">50</div><div class="row" style="top:503px"><span class="c a">8dkwgqq4</span><span class="c b">Mầm 2</span><span class="c cc">Bùi Hoàng Anh</span><span class="c d">14/02/2023</span><span class="c i">Học</span></div>
<div class="rh" style="top:523px">51</div><div class="row" style="top:523px"><span class="c a">691mkyne</span><span class="c b">Mầm 2</span><span class="c cc">Nguyễn Ngọc Thúy</span><span class="c d">06/08/2021</span><span class="c i">Học</span></div>
<div class="rh" style="top:543px">52</div><div class="row" style="top:543px"><span class="c a">6xkmgl32</span><span class="c b">Mầm 2</span><span class="c cc">Phạm Thị Ngọc Anh</span><span class="c d">05/07/2021</span><span class="c i">Học</span></div>
<div class="rh" style="top:563px">53</div><div class="row" style="top:563px"><span class="c a">8v0ym9ew</span><span class="c b">Mầm 2</span><span class="c cc">Đỗ Thu Ngân</span><span class="c d">21/06/2021</span><span class="c i">Học</span></div>
<div class="rh" style="top:583px">54</div><div class="row" style="top:583px"><span class="c a">8zvk1r51</span><span class="c b">Chồi 1</span><span class="c cc">Bùi Đức Anh</span><span class="c d">01/06/2020</span><span class="c i">Học</span></div>
<div class="rh" style="top:603px">55</div><div class="row" style="top:603px"><span class="c a">83rqw44v</span><span class="c b">Chồi 1</span><span class="c cc">Trịnh Đức Tính</span><span class="c d">22/06/2020</span><span class="c i">Học</span></div>
<div class="rh" style="top:623px">56</div><div class="row" style="top:623px"><span class="c a">6xkmgrr1</span><span class="c b">Chồi 1</span><span class="c cc">Hoàng Ngọc Anh</span><span class="c d">05/06/2020</span><span class="c i">Học</span></div>
<div class="rh" style="top:643px">57</div><div class="row" style="top:643px"><span class="c a">82qjrw9q</span><span class="c b">Chồi 1</span><span class="c cc">Trần Đức Chính</span><span class="c d">17/06/2020</span><span class="c i">Học</span></div>
<div class="rh" style="top:663px">58</div><div class="row" style="top:663px"><span class="c a">6geolj4r</span><span class="c b">Chồi 1</span><span class="c cc">Mai Thị Yến Thanh</span><span class="c d">08/06/2020</span><span class="c i">Học</span></div>
<div class="rh" style="top:683px">59</div><div class="row" style="top:683px"><span class="c a">6geoljnr</span><span class="c b">Chồi 1</span><span class="c cc">Phạm Quốc Tuấn Anh</span><span class="c d">16/06/2020</span><span class="c i">Học</span></div>
<div class="rh" style="top:703px">60</div><div class="row" style="top:703px"><span class="c a">6geolj1n</span><span class="c b">Chồi 1</span><span class="c cc">Trần Minh Anh</span><span class="c d">10/06/2020</span><span class="c i">Học</span></div>
<div class="vl" style="left:143px;top:283px;height:426px"></div><div class="vl" style="left:261px;top:283px;height:426px"></div><div class="vl" style="left:427px;top:283px;height:426px"></div><div class="vl" style="left:545px;top:283px;height:426px"></div><div class="vl" style="left:663px;top:283px;height:426px"></div><div class="vl" style="left:805px;top:283px;height:426px"></div><div class="vl" style="left:930px;top:283px;height:426px"></div><div class="vl" style="left:1109px;top:283px;height:426px"></div><div class="vl" style="left:663px;top:263px;height:20px"></div><div class="vl" style="left:1109px;top:263px;height:20px"></div>
</div>
<!-- ===== vertical scrollbar ===== -->
<div class="abs" style="left:1137px;top:205px;width:19px;height:504px;background:#e6e6e6"></div>
<div class="abs" style="left:1140px;top:206px;width:15px;height:503px;background:#dadada"></div>
<div class="sb" style="left:1140px;top:207px;width:15px;height:15px"><svg class="abs" style="left:3px;top:4px" width="7" height="4" viewBox="0 0 7 4"><path d="M0 4 L3.5 0 L7 4 Z" fill="#777"/></svg></div>
<div class="sb" style="left:1140px;top:239px;width:15px;height:17px"></div>
<div class="sb" style="left:1140px;top:694px;width:15px;height:15px;z-index:5"><svg class="abs" style="left:3px;top:5px" width="7" height="4" viewBox="0 0 7 4"><path d="M0 0 L3.5 4 L7 0 Z" fill="#777"/></svg></div>
<div class="abs" style="left:1136px;top:225px;width:1px;height:484px;background:#b4b4b4;z-index:4"></div>
<!-- ===== sheet tab bar ===== -->
<div id="tabbar"></div>
<div class="abs" style="left:1px;top:709px;width:1136px;height:1px;background:#c4c4c4"></div>
<svg class="abs" style="left:26px;top:717px" width="36" height="10" viewBox="0 0 36 10"><path d="M5 1 L1 5 L5 9 Z" fill="#c3c3c3"/><path d="M30 1 L34 5 L30 9 Z" fill="#c3c3c3"/></svg>
<div class="abs" style="left:100px;top:709px;width:117px;height:25px;background:#fff;border-bottom:2px solid #217346;"></div>
<span class="f" style="transform:scaleX(0.9231);left:111.9px;top:715.2px;font-size:13.6px;font-weight:bold;color:#217346;">Hồ sơ học sinh</span><span class="f" style="transform:scaleX(0.9682);left:228.4px;top:715.5px;font-size:13.3px;color:#444;">Data</span>
<div class="abs" style="left:268px;top:713px;width:1px;height:20px;background:#b8b8b8"></div>
<svg class="abs" style="left:301px;top:713.5px" width="18" height="18" viewBox="0 0 18 18"><circle cx="9" cy="9" r="7.5" fill="none" stroke="#6a6a6a" stroke-width="1.3"/><path d="M9 5 V13 M5 9 H13" stroke="#6a6a6a" stroke-width="1.8"/></svg>
<!-- hscroll -->
<div class="abs" style="left:581px;top:718px;width:2px;height:10px;background:repeating-linear-gradient(#b0b0b0 0 2px,transparent 2px 4px)"></div>
<div class="abs" style="left:598px;top:716px;width:536px;height:15px;background:#dadada"></div>
<div class="sb" style="left:598px;top:716px;width:15px;height:15px"><svg class="abs" style="left:4px;top:3px" width="4" height="7" viewBox="0 0 4 7"><path d="M4 0 L0 3.5 L4 7 Z" fill="#555"/></svg></div>
<div class="sb" style="left:612px;top:716px;width:194px;height:15px"></div>
<div class="sb" style="left:1119px;top:716px;width:15px;height:15px"><svg class="abs" style="left:5px;top:3px" width="4" height="7" viewBox="0 0 4 7"><path d="M0 0 L4 3.5 L0 7 Z" fill="#555"/></svg></div>
<!-- ===== status bar ===== -->
<div id="status"></div>
<span class="f" style="transform:scaleX(0.9293);left:6.9px;top:743.0px;font-size:12px;color:#262626;">Select destination and press ENTER or choose Paste</span><span class="f" style="transform:scaleX(0.8859);left:1112.0px;top:742.5px;font-size:12px;color:#262626;">100%</span>
<div class="abs" style="left:847px;top:738px;width:40px;height:21px;background:#c6c6c6"></div>
<svg class="abs" style="left:860px;top:741px" width="13" height="13" viewBox="0 0 13 13"><path d="M0.5 0.5 H12.5 V12.5 H0.5 Z M4.5 0.5 V12.5 M8.5 0.5 V12.5 M0.5 4.5 H12.5 M0.5 8.5 H12.5" fill="none" stroke="#6a6a6a" stroke-width="1"/></svg>
<svg class="abs" style="left:900px;top:741px" width="14" height="13" viewBox="0 0 14 13"><path d="M0.5 0.5 H13.5 V12.5 H0.5 Z" fill="none" stroke="#6a6a6a"/><path d="M3.5 2.5 H10.5 V10.5 H3.5 Z M5 4.5 H9 M5 6.5 H9 M5 8.5 H9" fill="none" stroke="#6a6a6a"/></svg>
<svg class="abs" style="left:940px;top:741px" width="14" height="13" viewBox="0 0 14 13"><path d="M0.5 0.5 H13.5 V12.5 H0.5 Z M0.5 7.5 H8.5 V0.5 M4.5 0.5 V7.5" fill="none" stroke="#6a6a6a"/></svg>
<div class="abs" style="left:973px;top:747px;width:7px;height:1px;background:#444"></div>
<div class="abs" style="left:986px;top:747px;width:100px;height:1px;background:#666"></div>
<div class="abs" style="left:1034px;top:742px;width:5px;height:12px;background:#5e5e5e"></div>
<div class="abs" style="left:1091px;top:747px;width:8px;height:1px;background:#444"></div>
<div class="abs" style="left:1094.5px;top:743px;width:1px;height:9px;background:#444"></div>
<div id="frame"></div>
</div>
</body>
</html>
